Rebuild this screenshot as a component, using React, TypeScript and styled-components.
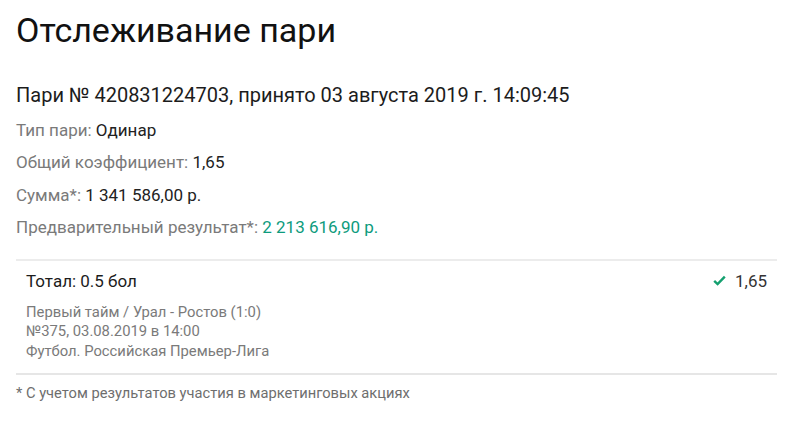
import styled, { createGlobalStyle } from "styled-components";

const Global = createGlobalStyle`
  body {
    margin: 0;
    background: #fff;
    font-family: Roboto, "Liberation Sans", sans-serif;
    color: #1f1f1f;
  }
`;

const Page = styled.div`
  padding: 8px 23px 0 16px;
`;
const Title = styled.h1`
  margin: 0;
  font-size: 34px;
  font-weight: 400;
  line-height: 44px;
  color: #111;
`;
const BetHeader = styled.div`
  margin-top: 31px;
  font-size: 20px;
  line-height: 24px;
  color: #1c1c1c;
`;
const InfoList = styled.div`
  margin-top: 13px;
  display: flex;
  flex-direction: column;
  gap: 12.3px;
`;
const InfoRow = styled.div`
  font-size: 17px;
  line-height: 20px;
  color: #7a7a7a;
`;
const Value = styled.span<{ $accent?: boolean }>`
  color: ${(p) => (p.$accent ? "#0d9b7d" : "#222")};
`;
const Event = styled.div`
  margin-top: 22px;
  border-top: 2px solid #ececec;
  border-bottom: 2px solid #e6e6e6;
  padding: 10px 10px 12px 10px;
`;
const EventTop = styled.div`
  display: flex;
  justify-content: space-between;
  align-items: center;
  font-size: 17px;
  line-height: 20px;
  color: #1c1c1c;
`;
const Odds = styled.div`
  display: flex;
  align-items: center;
  gap: 9px;
  color: #333;
`;
const EventInfo = styled.div`
  margin-top: 12px;
  font-size: 14.8px;
  line-height: 19.5px;
  color: #7a7a7a;
`;
const Note = styled.div`
  margin-top: 9px;
  font-size: 14.7px;
  line-height: 18px;
  color: #6e6e6e;
`;

function Check() {
  return (
    <svg width="13" height="11" viewBox="0 0 13 11">
      <path d="M1.2 5.8 L4.6 9 L11.8 1.6" fill="none" stroke="#14a06f" strokeWidth="2.4" />
    </svg>
  );
}

export default function App() {
  return (
    <Page>
      <Global />
      <Title>Отслеживание пари</Title>
      <BetHeader>Пари № 420831224703, принято 03 августа 2019 г. 14:09:45</BetHeader>
      <InfoList>
        <InfoRow>
          Тип пари: <Value>Одинар</Value>
        </InfoRow>
        <InfoRow>
          Общий коэффициент: <Value>1,65</Value>
        </InfoRow>
        <InfoRow>
          Сумма*: <Value>1 341 586,00 р.</Value>
        </InfoRow>
        <InfoRow>
          Предварительный результат*: <Value $accent>2 213 616,90 р.</Value>
        </InfoRow>
      </InfoList>
      <Event>
        <EventTop>
          <span>Тотал: 0.5 бол</span>
          <Odds>
            <Check />
            1,65
          </Odds>
        </EventTop>
        <EventInfo>
          Первый тайм / Урал - Ростов (1:0)
          <br />
          №375, 03.08.2019 в 14:00
          <br />
          Футбол. Российская Премьер-Лига
        </EventInfo>
      </Event>
      <Note>* С учетом результатов участия в маркетинговых акциях</Note>
    </Page>
  );
}
